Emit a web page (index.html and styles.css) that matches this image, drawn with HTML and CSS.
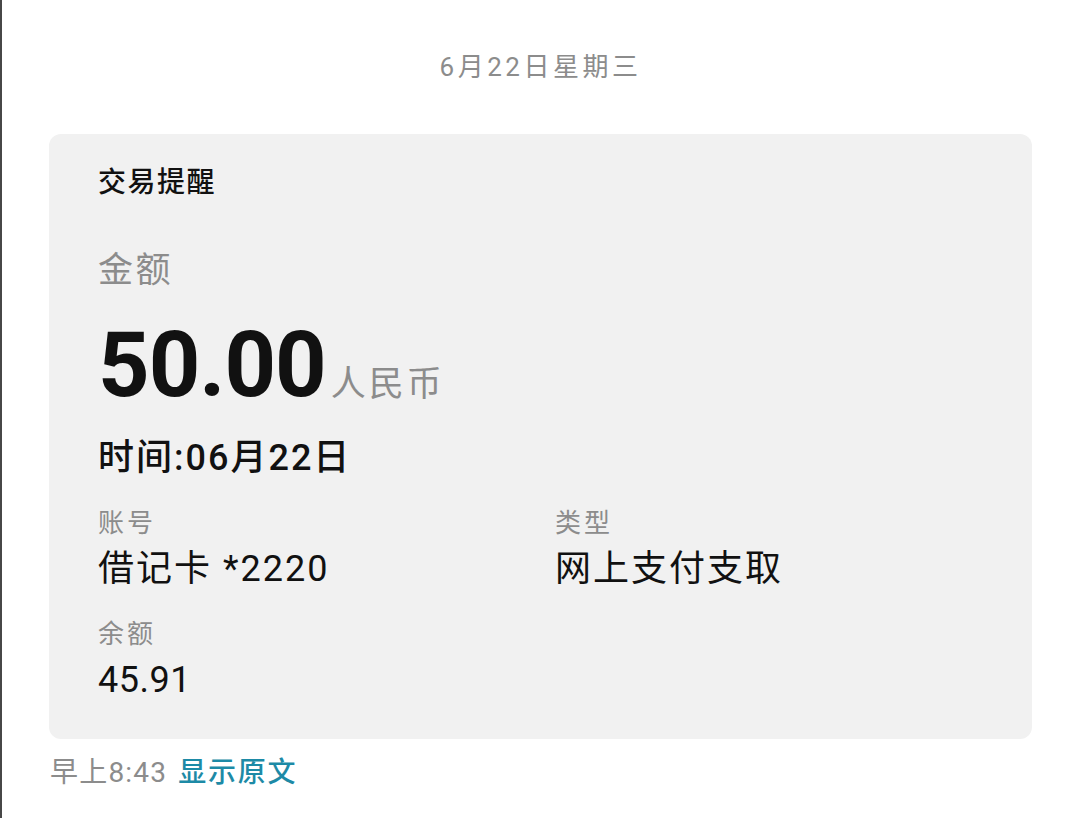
FILE: index.html
```html
<!DOCTYPE html>
<html lang="zh-CN">
<head>
  <meta charset="UTF-8" />
  <meta name="viewport" content="width=device-width, initial-scale=1.0" />
  <title>交易提醒</title>
  <link rel="stylesheet" href="styles.css">
</head>
<body>
  <div class="screen">
    <div class="day">6月22日星期三</div>

    <div class="card">
      <div class="card-title">交易提醒</div>
      <div class="label big-label">金额</div>
      <div class="amount">
        <span class="amount-num">50.00</span>
        <span class="amount-unit">人民币</span>
      </div>
      <div class="time">时间:06月22日</div>

      <div class="fields">
        <div class="field">
          <div class="label">账号</div>
          <div class="value">借记卡 *2220</div>
        </div>
        <div class="field">
          <div class="label">类型</div>
          <div class="value">网上支付支取</div>
        </div>
        <div class="field">
          <div class="label">余额</div>
          <div class="value num">45.91</div>
        </div>
      </div>
    </div>

    <div class="meta">
      <span class="meta-time">早上8:43</span>
      <span class="meta-link">显示原文</span>
    </div>
  </div>
</body>
</html>
```

FILE: styles.css
```css
:root {
  --bg: #ffffff;
  --card: #f1f1f1;
  --fg: #111111;
  --muted: #8c8c8c;
  --link: #1d8aa6;
  --edge: #474747;
}
* { box-sizing: border-box; margin: 0; padding: 0; }
html, body { height: 100%; background: var(--bg); color: var(--fg); font-family: Roboto, 'Noto Sans CJK SC', sans-serif; }
.screen { min-height: 100%; border-left: 2px solid var(--edge); padding: 49px 48px 0 47px; }
.day { text-align: center; font-size: 26px; line-height: 36px; color: var(--muted); letter-spacing: 3.5px; margin-bottom: 49px; }

.card { background: var(--card); border-radius: 12px; padding: 29px 49px 37px; }
.card-title { font-size: 28px; line-height: 40px; font-weight: 500; letter-spacing: 1.5px; margin-bottom: 44px; }
.label { color: var(--muted); font-size: 26px; line-height: 36px; letter-spacing: 3px; }
.big-label { font-size: 35px; line-height: 48px; letter-spacing: 2.5px; margin-bottom: 21px; }
.amount { display: flex; align-items: baseline; height: 100px; }
.amount-num { font-size: 90px; line-height: 100px; font-weight: 700; letter-spacing: -1px; }
.amount-unit { font-size: 35px; color: var(--muted); letter-spacing: 3px; margin-left: 5px; }
.time { font-size: 36px; line-height: 44px; font-weight: 500; letter-spacing: 2px; margin: 20px 0 25px; }

.fields { display: grid; grid-template-columns: 457px 1fr; row-gap: 25px; }
.field .label { margin-bottom: 6px; }
.value { font-size: 36px; line-height: 44px; letter-spacing: 2px; }
.value.num { letter-spacing: 0.5px; }

.meta { font-size: 28px; line-height: 40px; margin-top: 14px; padding-left: 1px; }
.meta-time { color: var(--muted); letter-spacing: 1.2px; }
.meta-link { color: var(--link); font-weight: 500; letter-spacing: 1.8px; margin-left: 4px; }
```
